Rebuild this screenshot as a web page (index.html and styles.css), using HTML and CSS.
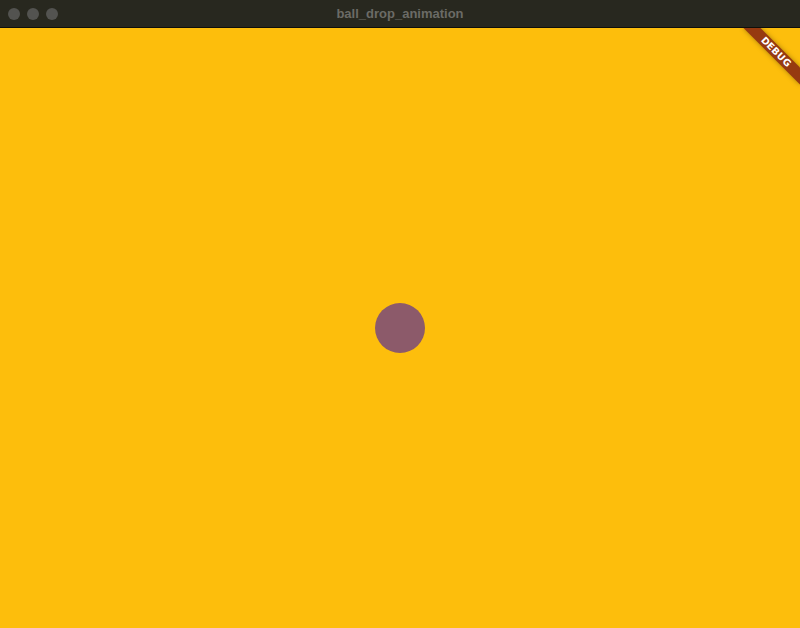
FILE: index.html
```html
<!DOCTYPE html>
<html>
<head>
<meta charset="utf-8">
<link rel="stylesheet" href="styles.css">
</head>
<body>
<div class="window">
  <div class="titlebar">
    <div class="lights">
      <span class="light"></span>
      <span class="light"></span>
      <span class="light"></span>
    </div>
    <div class="title">ball_drop_animation</div>
  </div>
  <div class="content">
    <div class="ball"></div>
    <div class="banner"><span>DEBUG</span></div>
  </div>
</div>
</body>
</html>
```
FILE: styles.css
```css
html, body {
  margin: 0;
  padding: 0;
  width: 800px;
  height: 628px;
  overflow: hidden;
}
.window {
  display: flex;
  flex-direction: column;
  width: 800px;
  height: 628px;
}
.titlebar {
  height: 28px;
  flex: none;
  background: #28281f;
  border-bottom: 1px solid #0f0f0a;
  box-sizing: border-box;
  position: relative;
  display: flex;
  align-items: center;
  justify-content: center;
}
.lights {
  position: absolute;
  left: 8px;
  top: 8px;
  display: flex;
  gap: 7px;
}
.light {
  width: 12px;
  height: 12px;
  border-radius: 50%;
  background: #535350;
}
.title {
  font-family: "Liberation Sans", Arial, sans-serif;
  font-weight: bold;
  font-size: 13px;
  color: #6b6b66;
}
.content {
  flex: 1;
  background: #fdbe0c;
  position: relative;
  overflow: hidden;
  display: flex;
  align-items: center;
  justify-content: center;
}
.ball {
  width: 50px;
  height: 50px;
  border-radius: 50%;
  background: #8c5a6a;
}
.banner {
  position: absolute;
  width: 80px;
  height: 12px;
  left: 736px;
  top: 18px;
  transform: rotate(45deg);
  background: #963a10;
  box-shadow: 0 0 5px rgba(0,0,0,0.35);
  display: flex;
  align-items: center;
  justify-content: center;
}
.banner span {
  font-family: "DejaVu Sans", sans-serif;
  font-weight: bold;
  font-size: 9.5px;
  line-height: 12px;
  color: #ffffff;
  letter-spacing: 0.2px;
}
```
